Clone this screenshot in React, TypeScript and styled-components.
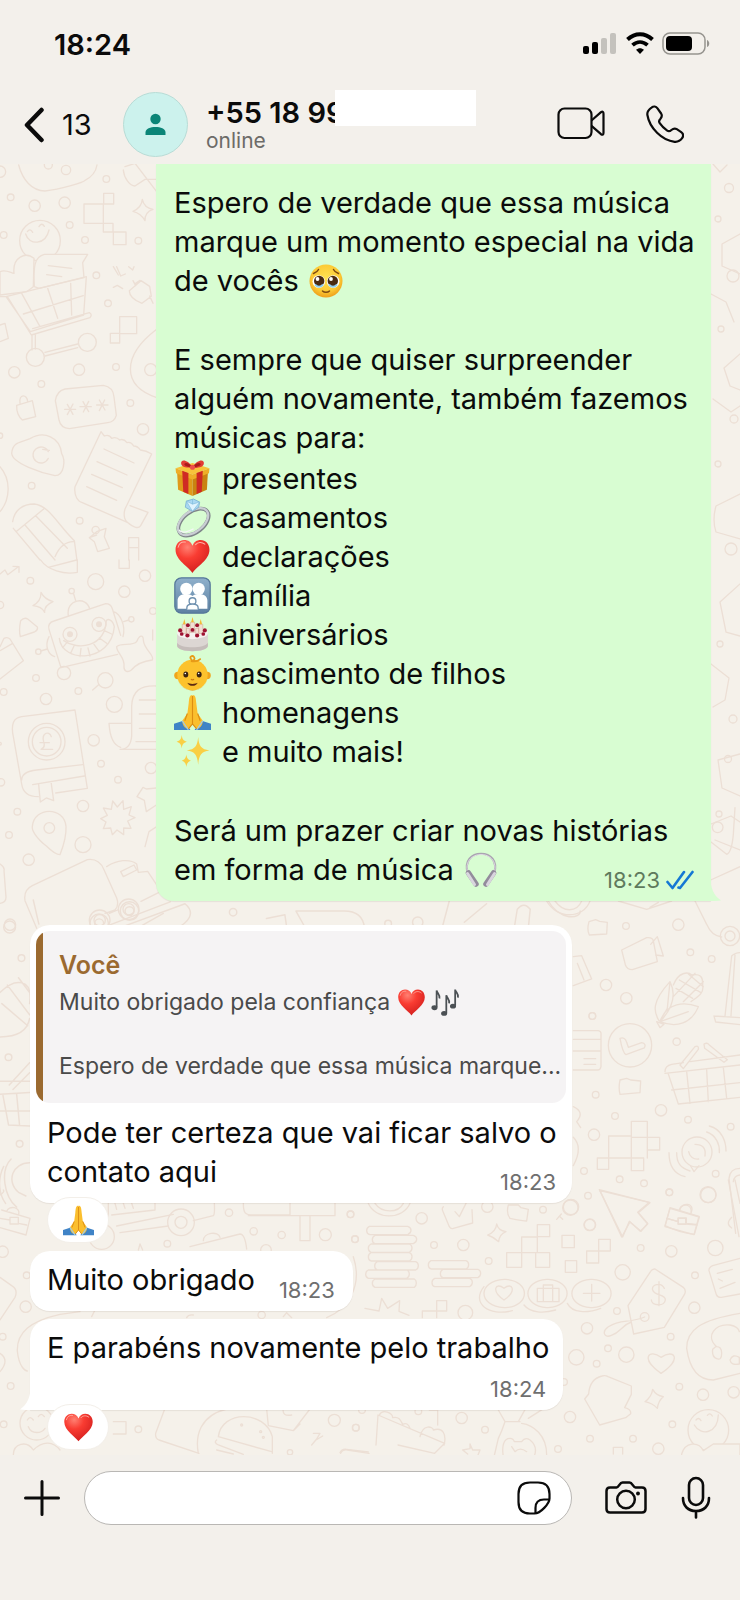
import React from 'react';
import styled, { createGlobalStyle } from 'styled-components';

const GlobalStyle = createGlobalStyle`
  * { box-sizing: border-box; }
  body {
    margin: 0;
    background: #f3f0eb;
    color: #0b0b0b;
    font-family: Inter, "Liberation Sans", sans-serif;
  }
  p, h1, ul { margin: 0; padding: 0; font: inherit; }
  ul { list-style: none; }
`;

const Screen = styled.div`
  display: flex;
  flex-direction: column;
  min-height: 100vh;
  background: #f3f0eb;
`;

const StatusBar = styled.div`
  display: flex;
  align-items: center;
  justify-content: space-between;
  height: 84px;
  padding: 4px 30px 0 54px;
  font-size: 29px;
  font-weight: 600;
`;

const StatusIcons = styled.div`
  display: flex;
  align-items: center;
  gap: 8px;
`;

const Header = styled.header`
  display: flex;
  align-items: center;
  height: 80px;
  padding: 0 56px 0 20px;
`;

const IconButton = styled.button`
  display: flex;
  align-items: center;
  padding: 0;
  border: 0;
  background: none;
  color: #0b0b0b;
  font: inherit;
  flex: none;
`;

const BackButton = styled(IconButton)`
  gap: 14px;
  width: 103px;
  font-size: 29px;
`;

const Contact = styled.div`
  position: relative;
  flex: 1;
  min-width: 0;
  margin-left: 18px;
`;

const ContactName = styled.h1`
  padding-top: 2px;
  font-size: 29px;
  line-height: 32px;
  font-weight: 600;
`;

const Presence = styled.p`
  font-size: 21px;
  line-height: 24px;
  color: #6c6b68;
`;

const Redaction = styled.span`
  position: absolute;
  left: 129px;
  top: -5px;
  width: 141px;
  height: 36px;
  background: #fff;
`;

const CallActions = styled.div`
  display: flex;
  align-items: center;
  gap: 41px;
`;

const Chat = styled.main`
  position: relative;
  display: flex;
  flex-direction: column;
  align-items: flex-start;
  flex: 1;
  padding: 0 29px 0 30px;
  background: #f5f1ea;
  overflow: hidden;
`;

const WallpaperArt = styled.svg`
  position: absolute;
  inset: 0;
  width: 100%;
  height: 100%;
`;

const Bubble = styled.article`
  position: relative;
  background: #fff;
  box-shadow: 0 1px 1px rgba(60, 40, 20, 0.08);
  font-size: 29px;
  line-height: 39px;
`;

const SentBubble = styled(Bubble)`
  display: flex;
  flex-direction: column;
  gap: 40px;
  align-self: flex-end;
  width: 555px;
  max-width: 82%;
  padding: 19px 12px 12px 18px;
  border-radius: 0 0 0 18px;
  background: #d8fdd2;
`;

const QuotedBubble = styled(Bubble)`
  width: 542px;
  max-width: 88%;
  margin-top: 24px;
  padding: 6px;
  border-radius: 20px;
`;

const ShortBubble = styled(Bubble)`
  display: flex;
  align-items: flex-end;
  gap: 24px;
  margin-top: 8px;
  padding: 9px 18px 12px 17px;
  border-radius: 20px;
`;

const TallBubble = styled(Bubble)`
  display: flex;
  flex-direction: column;
  margin-top: 8px;
  padding: 9px 14px 8px 17px;
  border-radius: 20px 20px 20px 0;
`;

const Tail = styled.svg<{ $side: 'left' | 'right' }>`
  position: absolute;
  bottom: 0;
  ${(p) => (p.$side === 'left' ? 'left: -11px;' : 'right: -11px;')}
`;

const Lines = styled.p`
  white-space: pre-line;
`;

const ClosingLine = styled.div`
  display: flex;
  align-items: flex-end;
  justify-content: space-between;
  padding-right: 5px;
`;

const TopicList = styled.ul`
  padding-top: 2px;
`;

const Topic = styled.li`
  display: flex;
  align-items: center;
  gap: 11px;
`;

const Meta = styled.div<{ $sent?: boolean }>`
  display: flex;
  align-items: center;
  gap: 6px;
  margin-bottom: -4px;
  font-size: 22px;
  line-height: 26px;
  color: ${(p) => (p.$sent ? '#5f7a5d' : '#6f6f6f')};
`;

const TallMeta = styled(Meta)`
  align-self: flex-end;
  margin: 9px 3px 0 0;
`;

const Quote = styled.blockquote`
  margin: 0;
  height: 172px;
  padding: 18px 4px 0 23px;
  border-radius: 14px;
  background: linear-gradient(to right, #9b6a30 7px, #f5f3f4 7px);
  color: #4a4a4a;
  font-size: 23px;
  line-height: 32px;
`;

const QuoteAuthor = styled.p`
  margin-bottom: 5px;
  font-size: 25px;
  font-weight: 600;
  color: #9b6a30;
`;

const QuoteLine = styled.p`
  display: flex;
  align-items: center;
  gap: 5px;
  margin-bottom: 32px;
`;

const QuoteCut = styled.p`
  white-space: nowrap;
`;

const QuotedBody = styled.div`
  padding: 10px 5px 6px 11px;
`;

const Reaction = styled.div`
  position: relative;
  display: flex;
  align-items: center;
  justify-content: center;
  width: 62px;
  height: 46px;
  margin: -6px 0 0 17px;
  border: 1px solid #f3efe9;
  border-radius: 23px;
  background: #fff;
`;

const Emoji = styled.svg<{ $size?: number; $gap?: number }>`
  flex: none;
  width: ${(p) => p.$size ?? 37}px;
  height: ${(p) => p.$size ?? 37}px;
  margin-left: ${(p) => p.$gap ?? 0}px;
  vertical-align: -8px;
  overflow: visible;
`;

const Footer = styled.footer`
  display: flex;
  align-items: flex-start;
  height: 145px;
  padding: 16px 29px 0 23px;
`;

const FooterButton = styled(IconButton)<{ $before?: number }>`
  height: 54px;
  margin-left: ${(p) => p.$before ?? 0}px;
`;

const Composer = styled.div`
  display: flex;
  align-items: center;
  flex: 1;
  min-width: 0;
  height: 54px;
  margin-left: 23px;
  padding: 0 20px 0 24px;
  border: 1px solid #b9b7b4;
  border-radius: 27px;
  background: #fff;
`;

const ComposerInput = styled.input`
  flex: 1;
  min-width: 0;
  height: 40px;
  border: 0;
  outline: 0;
  background: transparent;
  font: inherit;
  font-size: 29px;
`;

type EmojiProps = { size?: number; gap?: number };

const emoji = (label: string, art: React.ReactNode) =>
  function EmojiGlyph({ size, gap }: EmojiProps) {
    return (
      <Emoji viewBox="0 0 36 36" role="img" aria-label={label} $size={size} $gap={gap}>
        {art}
      </Emoji>
    );
  };

const Pleading = emoji('rosto suplicante', (
  <>
    <defs>
      <radialGradient id="face" cx=".5" cy=".4" r=".6">
        <stop offset="0" stopColor="#ffe152" />
        <stop offset=".7" stopColor="#fcc934" />
        <stop offset="1" stopColor="#ee9f1c" />
      </radialGradient>
    </defs>
    <circle cx="18" cy="18" r="16.5" fill="url(#face)" />
    <circle cx="10.800" cy="18.5" r="6.300" fill="#fff" />
    <circle cx="25.200" cy="18.5" r="6.300" fill="#fff" />
    <circle cx="11.2" cy="18" r="5.200" fill="#4a2a12" />
    <circle cx="24.8" cy="18" r="5.200" fill="#4a2a12" />
    <circle cx="9.5" cy="16" r="1.9" fill="#fff" />
    <circle cx="23" cy="16" r="1.9" fill="#fff" />
    <path d="M7 21.500c2 3 6 3 8 0M21 21.500c2 3 6 3 8 0" stroke="#8fd0f2" strokeWidth="2" fill="none" />
    <path d="M5.500 10.500c2-.6 4-2 5-4M30.500 10.500c-2-.6-4-2-5-4M14.500 28c1.800 1.800 5.200 1.800 7 0" stroke="#7d4a12" strokeWidth="1.500" fill="none" strokeLinecap="round" />
  </>
));

const Gift = emoji('presente', (
  <>
    <path d="M3 12l15 5v18L4 29z" fill="#e09a1a" />
    <path d="M33 12l-15 5v18l14-6z" fill="#c98310" />
    <path d="M1.500 8L18 3l16.500 5L18 14z" fill="#f7c33b" />
    <path d="M1.500 8L18 14v5L2 13zM34.500 8L18 14v5l16-6z" fill="#eeae27" />
    <path d="M8 10.500l6 2.200V33l-5-2zM28 10.500l-6 2.200V33l5-2z" fill="#cf2a24" />
    <path d="M18 7C13-1 6-1 7 4c.5 3 6 4 11 4 5 0 10.500-1 11-4 1-5-6-5-11 3z" fill="#e23b35" />
    <path d="M18 7c-3-4-7-5-8-3 0 2 4 3 8 3zM18 7c3-4 7-5 8-3 0 2-4 3-8 3z" fill="#a81c1c" />
    <circle cx="18" cy="7" r="2.500" fill="#ee5049" />
  </>
));

const Ring = emoji('aliança', (
  <>
    <ellipse cx="19" cy="22.500" rx="17" ry="10" transform="rotate(-38 19 22.500)" fill="none" stroke="#7e8489" strokeWidth="3.600" />
    <ellipse cx="18.500" cy="22" rx="17" ry="10" transform="rotate(-38 18.500 22)" fill="none" stroke="#c9ced3" strokeWidth="2.200" />
    <path d="M5 30c2 4 9 2 14-1" stroke="#f5f7f8" strokeWidth="1.200" fill="none" />
    <path d="M12 2l7-2 6 3-1 5-6 4-7-4z" fill="#a9d8f2" stroke="#6fa9cd" strokeWidth=".7" />
    <path d="M12 2l6 3 7-2-7 9zM18 5V0" fill="#dff3fd" stroke="#7db8da" strokeWidth=".6" />
  </>
));

const Heart = emoji('coração', (
  <>
    <defs>
      <radialGradient id="heart" cx=".35" cy=".22" r=".85">
        <stop offset="0" stopColor="#ff8072" />
        <stop offset=".4" stopColor="#f93c32" />
        <stop offset="1" stopColor="#cf1c1c" />
      </radialGradient>
    </defs>
    <path d="M18 34C14 28 1.500 21.500 1.500 11.500 1.500 5.500 5.500 2 10 2c3.800 0 6.800 2 8 5.500C19.200 4 22.200 2 26 2c4.500 0 8.500 3.500 8.500 9.500C34.500 21.500 22 28 18 34z" fill="url(#heart)" />
    <path d="M4 9c1-4 4-5.500 7-5M21 6.500c2-2.500 6-3 9-.5" stroke="#ffb3a8" strokeWidth="1" fill="none" strokeLinecap="round" />
  </>
));

const Family = emoji('família', (
  <>
    <defs>
      <linearGradient id="family" x1="0" y1="0" x2="0" y2="1">
        <stop offset="0" stopColor="#8fb0cb" />
        <stop offset="1" stopColor="#5e81a2" />
      </linearGradient>
    </defs>
    <rect x=".8" y=".8" width="34.400" height="34.400" rx="6.500" fill="url(#family)" stroke="#56789a" strokeWidth="1.200" />
    <circle cx="12" cy="11.500" r="6" fill="#fff" />
    <circle cx="24" cy="11.500" r="6" fill="#fff" />
    <path d="M3.500 31V23c0-4 3-6.500 8.500-6.500 2.500 0 5 .7 6 2 1-1.300 3.500-2 6-2 5.500 0 8.500 2.500 8.500 6.500v8z" fill="#fff" />
    <circle cx="18" cy="23.500" r="3.300" fill="#fff" stroke="#6d8fae" strokeWidth="1.300" />
    <path d="M12.500 31.500v-1.500c0-5 11-5 11 0v1.500" fill="#fff" stroke="#6d8fae" strokeWidth="1.300" />
  </>
));

const Cake = emoji('bolo', (
  <>
    <path d="M3 17v12c0 7 30 7 30 0V17z" fill="#dcd6d3" />
    <path d="M3 26c3 6 27 6 30 0v3c0 7-30 7-30 0z" fill="#c5bdba" />
    <ellipse cx="18" cy="16.500" rx="15" ry="6" fill="#f6f2ef" />
    <path d="M8 8h4v9H8zM16 6h4v10h-4zM24 8h4v9h-4zM12 12h3v8h-3zM21 12h3v8h-3z" fill="#f2dfd3" stroke="#cda08f" strokeWidth=".5" />
    <path d="M10 3l1.300 5H8.700zM18 1l1.300 5h-2.600zM26 3l1.300 5h-2.600z" fill="#f5b934" />
    <g fill="#9e1330">
      <circle cx="6" cy="14" r="2" /><circle cx="13.500" cy="9" r="1.900" /><circle cx="22.500" cy="9" r="1.900" /><circle cx="30" cy="14" r="2" />
      <circle cx="13" cy="19" r="2" /><circle cx="18" cy="13.500" r="1.900" /><circle cx="22.500" cy="19" r="2" /><circle cx="7.500" cy="17.500" r="1.800" /><circle cx="28.500" cy="17.500" r="1.800" />
    </g>
  </>
));

const Baby = emoji('bebê', (
  <>
    <circle cx="3.800" cy="20" r="3.600" fill="#f0a51c" />
    <circle cx="32.200" cy="20" r="3.600" fill="#f0a51c" />
    <circle cx="18" cy="19.500" r="14.800" fill="#fcc22d" />
    <path d="M4 24c3 14 25 14 28 0-2 7-7 10-14 10S6 31 4 24z" fill="#ec9a18" />
    <path d="M17 4.500C14 1.500 18 0 19.500 2s-.5 4-3 4c4 .8 7 0 9-2" fill="none" stroke="#e79a17" strokeWidth="1.700" strokeLinecap="round" />
    <ellipse cx="11.500" cy="19" rx="2.400" ry="2.900" fill="#3b2412" />
    <ellipse cx="24.500" cy="19" rx="2.400" ry="2.900" fill="#3b2412" />
    <circle cx="11" cy="18" r=".8" fill="#fff" /><circle cx="24" cy="18" r=".8" fill="#fff" />
    <path d="M16.500 23.500c1 .8 2 .8 3 0" stroke="#c97812" strokeWidth="1.200" fill="none" />
    <path d="M13 27c2 1.500 8 1.500 10 0-1 4-9 4-10 0z" fill="#5c2a12" />
  </>
));

const Pray = emoji('mãos unidas', (
  <>
    <path d="M0 29l9-3 7 9H0zM36 29l-9-3-7 9h16z" fill="#3f83c6" />
    <path d="M17.800 1c-2.800 0-3 3-3.500 8L13 19l-5 7c0 4 2.500 7.500 6 8l4-5zM18.200 1c2.800 0 3 3 3.500 8L23 19l5 7c0 4-2.500 7.500-6 8l-4-5z" fill="#fbbf2e" />
    <path d="M18 2v27M13 19l-2.500 7M23 19l2.500 7M14 34l4-5 4 5" stroke="#dc8e13" strokeWidth="1.100" fill="none" />
    <path d="M8 26l6 9M28 26l-6 9" stroke="#9acbf0" strokeWidth="1.200" />
  </>
));

const Sparkles = emoji('brilhos', (
  <g fill="#f9cf45">
    <path d="M23.500 4c.8 9 3 12 11 13-8 1-10.200 4.500-11 14-.8-9.500-3-13-11-14 8-1 10.200-4 11-13z" />
    <path d="M7.500 2c.6 4 1.500 5.500 5 6.500-3.500 1-4.400 2.500-5 6.500-.6-4-1.500-5.500-5-6.500 3.500-1 4.400-2.500 5-6.500z" />
    <path d="M12 21c.5 3.500 1.500 5 4.500 6-3 1-4 2.500-4.500 6-.5-3.500-1.500-5-4.500-6 3-1 4-2.500 4.500-6z" />
  </g>
));

const Headphones = emoji('fones de ouvido', (
  <>
    <path d="M5 22C-4-5 40-5 31 22" fill="none" stroke="#aaa5b1" strokeWidth="2.200" />
    <path d="M5 22C-3-4 39-4 31 22" fill="none" stroke="#e3e0e7" strokeWidth=".9" />
    <path d="M5.500 21l7.500 11M30.500 21L23 32" stroke="#938c9c" strokeWidth="5.500" strokeLinecap="round" />
    <path d="M4.500 21.500l7 11M31.500 21.500l-7 11" stroke="#d9d5de" strokeWidth="3" strokeLinecap="round" />
  </>
));

const Notes = emoji('notas musicais', (
  <g fill="#4b5054" stroke="#4b5054" strokeWidth="2.200">
    <path d="M7 24V3c1 4 4.500 5 3.500 10M19 31V9c1 4 4.500 5 3.500 10M30 22V2c1 4 4.500 5 3.500 10" fill="none" />
    <ellipse cx="4.300" cy="24.500" rx="2.700" ry="2" /><ellipse cx="16.300" cy="31.500" rx="2.700" ry="2" /><ellipse cx="27.300" cy="22.500" rx="2.700" ry="2" />
  </g>
));

const TOPICS: [React.FC<EmojiProps>, string][] = [
  [Gift, 'presentes'],
  [Ring, 'casamentos'],
  [Heart, 'declarações'],
  [Family, 'família'],
  [Cake, 'aniversários'],
  [Baby, 'nascimento de filhos'],
  [Pray, 'homenagens'],
  [Sparkles, 'e muito mais!'],
];

type Dot = [number, number, number];

function Dots({ at }: { at: Dot[] }) {
  return (
    <>
      {at.map(([x, y, r]) => (
        <circle key={`${x}-${y}`} cx={x} cy={y} r={r} />
      ))}
    </>
  );
}

function Wallpaper() {
  return (
    <WallpaperArt viewBox="0 164 740 1291" preserveAspectRatio="xMidYMin slice" aria-hidden="true">
      <g fill="none" stroke="#ecdfd5" strokeWidth="4" strokeLinejoin="round" strokeLinecap="round">
        <g transform="translate(0 160) scale(.33333)">
          <Dots at={[[0, 35, 17], [319, 57, 10], [32, 112, 10], [104, 137, 17], [194, 128, 17], [209, 195, 10], [11, 225, 10], [255, 240, 10], [415, 242, 10], [289, 346, 10], [324, 430, 10], [43, 637, 17], [237, 629, 17], [348, 621, 10], [124, 672, 10], [391, 729, 10], [429, 808, 17], [0, 827, 8], [95, 977, 10], [239, 1082, 10], [198, 30, 14], [145, 15, 12], [452, 629, 18], [262, 547, 27], [106, 592, 27]]} />
          <path d="M56 15C68 60 95 92 135 93c45-6 115-25 120-32 20-10 33-28 36-46M370 30c2 25 20 48 35 48l30-20h35M375 20l30-10 65 85" />
          <path d="M311 100h30v32h-30zM252 132h58v58h-58zM310 190h29v26h-29zM340 216h38v38h-38zM427 118q5 25 32 30-25 8-24 34-12-22-36-28 26-12 28-36z" />
          <circle cx="120" cy="242" r="61" />
          <path d="M77 222c10 35 60 34 70-12M82 215q8-12 16 2M117 200q8-14 16-1" />
          <path fill="#f5f1ea" d="M0 335c15-8 30 2 42 5-5-50 35-65 60-45l-2 85-20 15-80 10z" />
          <path fill="#f5f1ea" d="M103 380c-3-60 0-90 30-97h130l-15 25 4 45-135 32zM145 317l70 8M140 344l45 6" />
          <path d="M18 410l241-60-8 115-160 50zM65 400l55 100M143 385l30 90M212 370l3 95M70 462l180-55M0 410h22l72 115 176-52q8-10-2-15l-170 48M96 525v45M106 525v42M135 577l98-25M135 588l98-25M0 495l15-5 10 45-25 10" />
          <path d="M340 320l15 25M350 320l12 28 14-6M386 320l12 10 4-10M340 382l12-6 16 10M388 392l35-30 26 17 5 30-28 21q-38-15-38-38zM399 362l8 15M420 361l-14 10M449 408l10 22" />
          <path d="M359 470h51v51h-51zM331 520h28v29h-28zM470 508c-105 80-105 170 0 205M50 736l47-14 10 48-40 10q-18-15-17-44zM60 730c-5-30 22-28 23-5" />
          <path d="M195 687l115-11q30 5 32 35l7 55q-6 20-26 22l-115 18q-26-2-31-26l-11-58q5-30 29-35zM194 748h33M202 733l17 30M219 732l-17 32M240 740h34M249 725l17 30M266 724l-16 32M290 735h34M298 720l17 30M314 720l-16 32" />
          <path d="M35 880c3-35 25-32 55-44 42-25 90-5 95 45 12 20 8 66-20 66-40-8-128-36-130-67zM145 875a24 24 0 1 0 0 20M128 868l20 3" />
          <path d="M303 815l10 13q14-6 22 7 14-6 24 5 12-5 22 8 12-4 20 10 12 0 20 12 18 2 34 12l-80 165c-6 20 0 35 7 40q30 25 40 10l22-40-54-20M225 980l78-165M225 980c-4 30 10 45 22 48l135 59M312 867l90 42M291 905l90 40M275 943l92 40M260 980l90 41" />
          <path d="M0 920c35 40 30 100 0 135M38 1085c5-35 30-53 65-53 45 5 70 62 120 110l8 60M40 1105l80 95M48 1115l83-68M75 1095l90 105M107 1067l95 98M165 1190q20-45 55-45" />
          <path d="M270 1132l20-7M290 1115l28-10-5 25 15 35-35 10-10-30-15-12z" /><circle cx="287" cy="1110" r="11" /><path d="M386 1133h30v67M386 1133v67M386 1163h30" />
        </g>

        <g transform="translate(0 560) scale(.33333)">
          <Dots at={[[287, 65, 24], [91, 62, 10], [435, 47, 17], [373, 95, 17], [0, 135, 11], [394, 178, 8], [459, 153, 10], [115, 275, 8], [192, 339, 20], [108, 354, 10], [316, 361, 23], [11, 396, 10], [235, 393, 10], [138, 417, 17], [343, 433, 24], [0, 551, 4], [281, 541, 17], [303, 611, 10], [354, 659, 10], [453, 624, 17], [3, 667, 11], [249, 738, 17], [52, 755, 10], [27, 825, 10], [249, 854, 24], [148, 804, 16], [86, 899, 17], [30, 1094, 17], [299, 1081, 31], [299, 1081, 17], [386, 1048, 31], [386, 1048, 17], [140, 545, 55], [140, 545, 43], [210, 223, 21], [297, 193, 21], [215, 93, 8]]} />
          <g fill="#ecdfd5"><circle cx="210" cy="223" r="7" /><circle cx="297" cy="193" r="7" /></g>
          <path d="M0 42q12-10 15-12l8 14 30-22M39 19l18 1v17M122 0c20 30 70 45 110 37V0M145 22l85-22M357 0v25h31V0M123 97q10 20 36 28-27 12-25 32-9-18-35-20 25-14 24-40zM62 182q12-12 22-4l28 23q3 9-9 15l-42 14q-5-20 1-48zM0 260l12-25q10-5 18 2l40 65-70 55M0 272l38-22" />
          <path d="M183 323l-36-115q-5-20 15-25l155-52q15 0 20 15l25 80M183 323l170-40M205 167c-8-50 55-60 64-20M221 102l6 20M340 155c20 5 38 40 29 75M371 185l15-5M122 273l20-6M147 230c-15 30 0 55 17 60M178 235c8 75 155 75 165-35-5-22-20-25-24-18-5 80-85 90-128 60M188 263l15-18M212 280l10-22M240 290l3-25M270 288l-6-24M298 275l-16-22M320 250l-22-16M335 222l-22-10" />
          <path fill="#f5f1ea" d="M350 260c12-14 48 0 60-15 8-20 20-22 20-5 2 30 35 45 27 60-28 3-50 15-63 30-10 8-22 5-22-8 5-30-22-42-22-62z" />
          <path d="M278 390l18-16M470 378c-50-2-73 15-75 60v90c-3 40-30 40-35 40h110M395 490h-68c3 50 20 68 35 72M418 420h52M418 462h52M418 505h52M408 545h62M458 210v30" />
          <path d="M40 530q-12-55 25-60l160-20 37 235-95 14M40 530l25 142q5 38 50 38M65 660q0-25 45-30l138-16M98 674l155-26M116 674l5 52 18-12 22 8-8-57M154 530c-8-20-30-10-23 15 5 15 0 20-8 23h35M120 548h28" />
          <path d="M180 884q-15 0-40-25c-35-28-45-50-43-60 6-60 95-60 101 0q2 35-18 85zM302 776l20-10-12-22 24 4 4-25 14 18 17-19 2 26 23-8-7 25 18 8-22 10 10 22-22-1 0 20-20-14-14 14-5-20-22 2 8-20zM411 710l18-28 10 5 30-3M469 735l-30 20-6-34-22-11M435 860l12-45 23-15" />
          <path d="M110 1105L75 1022q-5-32 22-45l165-78q35-5 50 30l38 85q8 22-5 36l-30 10M320 920c30-20 70-25 90-8l5 25 28-3 40 60-60 30M362 935l40-20 8 15-40 20zM420 1100l70-40M328 1060l25-10M0 912q15 10 12 20l6 80q0 16-18 18" />
        </g>

        <g transform="translate(0 900) scale(.37)">
          <Dots at={[[268, 63, 25], [268, 63, 12], [350, 30, 25], [350, 30, 12], [26, 73, 16], [630, 33, 10], [1049, 64, 9], [1129, 60, 14], [58, 157, 9], [23, 425, 9], [53, 659, 9]]} />
          <path d="M290 70L460 5M310 80l190-70c30 25 10 50-25 68M90 0l15 65M720 50l50-10 5 35M745 75l-25-5M800 30l130 0q50 0 55 45M800 30l25 45M1195 75l20-75M1255 60l60-50M1390 75l8-50q18-22 35 0l-5 50M1480 0c35 60 90 50 88 30" />
          <path d="M0 250c40-40 90-40 80 30M0 370c50 0 75-20 80-50M20 230l60 80M50 210l30 40M5 280l70 60M25 500l55-60M35 512l45-45M0 490h80M0 525l80-5M8 528l15 80 57 3M45 525l8 85M0 570h80M80 710c-45 0-65 50-30 80l20 10M30 700c-30 30-20 100 15 130M10 720c-20 40-10 80 5 100" />
        </g>

        <g transform="translate(440 820) scale(.33333)">
          <Dots at={[[833, 22, 16], [558, 318, 10], [715, 314, 17], [751, 397, 10], [815, 417, 10], [498, 495, 17], [559, 535, 17], [457, 588, 10], [570, 676, 65], [710, 665, 11], [870, 348, 29], [870, 348, 15]]} />
          <path d="M812 65l48 38q15-5 20-60l5-80M812 180l88-40M765 243l35 70q15 35 45 38M320 243c30 55 110 55 130 0M345 243c25 35 65 35 80 0M535 243l85 25 75-25M630 262l25-15" />
          <path d="M447 305l20-6 12 5 23 3-2 35-52 3q-8-15-1-40zM545 390l75-37q18-2 20 10l12 62-75 24q-16 0-21-15zM632 373l20-23 18 58-23-3M400 410l25-3 30 70-55 20M412 430l20 50" />
          <path d="M690 485c-55 60-50 90-33 117M690 485c20 40 8 80-30 120M690 485l-8 80-22 38M660 605c20-60 75-60 115-45-20 50-65 65-115 45zM660 605l85-30M650 605l10 18 12-10zM700 495c15-40 45-40 55-30 25-5 35 5 33 30 5 25-15 35-35 50M708 505l50 30M718 480l65 38M745 462l45 38M700 530l65-70M730 545l60-60" />
          <path d="M855 588l20-180q10-10 25-10M885 405l-12 182M822 588l78 5M822 588l5 18 73 8M540 655q15-5 20 12l5 15 40-14q15 3 8 16l-55 20q-10-5-18-49zM400 632h75q8 2 8 8v100q-2 10-10 10h-73M400 658h83M400 693h83M432 716h35M432 733h35" />
        </g>

        <g transform="translate(560 1000) scale(.33333)">
          <Dots at={[[97, 48, 10], [107, 284, 10], [303, 331, 17], [165, 348, 10], [384, 359, 10], [512, 380, 10], [102, 404, 17], [72, 513, 10], [179, 538, 10], [252, 550, 10], [467, 521, 10], [84, 587, 10], [328, 577, 10], [444, 584, 24], [33, 621, 23], [90, 674, 17], [411, 456, 45]]} />
          <path d="M315 215q0-18 20-22l35-5M390 185l150-20M315 220l225-25M325 222l30 90 185-20M380 215l10 95M440 210l5 95M490 203l10 92M335 270l205-22M360 195l45-55q12-5 10 8l-45 58zM432 132q10-5 15 2l55 45-10 8-58-42zM180 240l20-5 12 5 30 3-2 35-60 5q-5-20 0-43z" />
          <path d="M146 408h68v66h-68zM214 364h48v48h-48zM262 412h37v38h-37zM214 412h48v62M112 474h34v34h-34zM214 474h37v38h-37zM392 498l10 17 15-18M386 455a26 26 0 0 0 30 22M405 433q35 0 30 35M448 378c40 10 50 50 50 75M440 396c30 10 40 40 38 62M350 458c0 30 10 45 40 55M327 458c0 45 20 65 48 72M40 320c22 10 28 25 10 45l12 18M40 412q30 30 0 85" />
          <path d="M118 569l150 38-35 30 30 35-22 22-33-30-20 47zM330 623l87 26-15 55-87-24zM320 655l35 10M378 670l30 3M355 655h22v18h-22zM358 630c5-22 40-20 35 10M540 505q-30 0-33 30l20 165M520 545q2-18 20-20M8 658L0 650" />
        </g>

        <g transform="translate(340 1180) scale(.33333)">
          <Dots at={[[32, 103, 10], [245, 115, 17], [45, 177, 10], [282, 195, 10], [370, 195, 17], [446, 243, 10], [442, 80, 17], [609, 89, 10], [1105, 45, 23], [749, 135, 17], [988, 37, 10], [902, 204, 10], [994, 214, 17], [1126, 204, 23], [848, 277, 23], [1065, 286, 10], [1063, 383, 17], [831, 393, 10], [376, 398, 22], [741, 445, 17], [992, 470, 10], [709, 532, 23], [804, 505, 10], [770, 551, 10], [859, 524, 23], [672, 606, 10], [1018, 620, 10], [1089, 644, 17], [1181, 637, 17], [690, 711, 17], [365, 714, 17], [48, 743, 10], [435, 749, 10], [235, 694, 10], [66, 690, 10], [997, 733, 10], [750, 776, 10], [879, 776, 10], [955, 806, 17], [654, 807, 10], [914, 411, 13], [1105, 750, 61]]} />
          <path d="M85 70c20 50 105 50 125 0M105 70c20 30 70 30 85 0M310 80q-5 5-2 12l20 48q5 8 12 5l58-16-2-40M345 95l13 15 20-40M505 75h30l8 8 22 5-5 35q-10 0-50-8-12-15-5-40zM470 132q5 20 28 23-20 8-22 30-15-14-33-20 25-10 27-33z" />
          <path d="M88 139h115q10 3 10 12t-10 13H90q-10-3-10-12t8-13zM105 166h115q10 3 10 12t-10 13H105q-8-3-8-12t8-13zM93 192h115q8 3 8 12t-8 13H93q-8-3-8-12t8-13zM93 218h115q8 3 8 12t-8 13H93q-8-3-8-12t8-13zM112 245h115q8 3 8 12t-8 13H112q-8-3-8-12t8-13zM85 270h115q8 3 8 12t-8 13H85q-8-3-8-12t8-13zM105 297h118q6 3 6 12t-6 13H105q-8-3-8-12t8-13zM273 242h105q8 3 8 12t-8 13H273q-8-3-8-12t8-13zM309 268h105q8 3 8 12t-8 13H309q-8-3-8-12t8-13zM284 295h105q8 3 8 12t-8 13H284q-8-3-8-12t8-13z" />
          <path d="M592 134h37v36h-37zM545 171h47v47h-47zM500 218h45v44h-45zM587 218h42v44h-42zM592 171v47M666 166h37v37h-37zM676 242h34v35h-34zM776 178h35v35h-35zM740 213h36v36h-36zM290 362h30v31h-30zM247 413v-20h43v20M75 385l42 8 8-38 18 30 36-23-2 32 30 12M650 118l14-16" />
          <circle cx="691" cy="83" r="23" />
          <path d="M492 298h5c75 5 75 80 0 85h-5c-80-5-80-80 0-85zM620 298h5c75 5 75 80 0 85h-5c-75-5-75-80 0-85zM752 298h5c75 5 75 80 0 85h-5c-75-5-75-80 0-85zM432 320c-40 50 15 90 85 72M552 375c20 25 60 25 95 15M682 370c15 30 60 30 100 15M492 360c-40-28-25-55 0-35 25-20 40 7 0 35zM592 325h65v40h-65zM610 325v-10h28v50M610 325v40M755 313v50M730 340h50" />
          <path d="M780 32l150 36-35 30 28 32-20 24-33-28-25 45zM990 85l88 26-15 52q-45-5-88-26zM980 115l35 10M1038 132l34 3M1014 114h25v18h-25zM1020 88c5-22 45-20 34 8M945 267l85 55q10 10 3 22l-60 98-92 20-17-85 68-103q5-8 13-7zM973 325c-10-20-40-12-35 5 5 18 40 12 38 30-3 20-40 18-42 0M957 305v72M914 411c-50 20-70 5-110 30-20 15-10 35 10 25 30-10 30-30 60-40" />
          <path d="M963 580c-65-45-35-75 0-48 40-27 65 5 0 48zM786 588q10-3 18 2l70 28v25l-20 40q20 5 18 18l-15 12-78 22-45-78 12-15q3-45 40-54zM938 628q10 18 32 22-15 12-18 35-15-16-37-20 20-15 23-37zM1200 400c-120 20-160 50-160 105 10 70 40 95 80 95l80-20M1130 500c-35-30-5-70 40-65q25 5 28 20M1127 500q18-2 18 20t-15 16-12-28zM1170 540q8-20 28-8v20q-25 5-28-12M1165 0l32 170M1185 0l15 70M1175 112q-20 20 0 32M1200 235l-82 22q-12 5-11 15l22 72q5 10 15 8l56-10M1132 280l45-12M1135 297l12 6M1140 325l45-18" />
          <path d="M1063 735c20 35 70 25 72-30M1068 720q8-10 15 2M1102 706q8-10 15 2" />
          <path fill="#f5f1ea" d="M1025 822c10-35 50-40 65-10l30-20h80v50h-175z" />
          <path d="M108 795l6-90 200 85-30 30-110-25M118 705c10-20 40-5 40 8 20-5 25 10 30 20q15-8 22 12M240 770c8-40 40-30 40-20 30-10 40 15 32 45M268 690h25v45M0 818q5-12 20-10l65 8M390 792l8 18 22 0-10 25M390 792v14l-22 4 15 12M475 690l20 35q-10 30-20 50l-14 60M620 825c0-60-40-90-75-95M535 725l25-45M495 725h45M565 715l55-35M490 830c-5-30 0-55 20-55q10 0 13 10h22q10-15 25-5 25 20 12 50M515 800l10 15q15-15 35 0" />
          <path d="M820 822v-20h28v20" />
        </g>

        <g transform="translate(0 1190) scale(.33333)">
          <Dots at={[[687, 68, 11], [761, 124, 11], [845, 135, 11], [1051, 73, 10], [976, 134, 18], [1065, 148, 10], [502, 161, 10], [8, 185, 17], [80, 256, 10], [77, 350, 17], [8, 440, 10], [32, 588, 10], [11, 703, 10], [415, 718, 10], [1003, 691, 18], [1067, 713, 10], [543, 97, 40], [543, 97, 18], [305, 140, 38], [785, 375, 11], [798, 180, 16], [870, 787, 8], [110, 700, 50]]} />
          <path d="M5 60l85 25-12 50-78-22M0 85l30 5M55 100l25 5M30 82h25v20H30zM20 65c5-20 45-15 35 10M0 15q15-10 10-15M325 40v40M335 75l130-15V40M345 40l5 18M370 40l5 15M395 40l5 15M350 108l170-35M360 128l145-20M580 92l60-15q5-5 3-37M730 40c0 30 5 35 30 35h110V40M745 77h260V40M900 77v75h30V77M570 170l150-38q15 0 20 45M610 152c0-25 45-30 50-10M415 180l5-18 8 18" />
          <path d="M0 262l35 25q20 12 10 35L0 390M275 380l10-20M240 365l-60 8c-90 20-130 55-128 110 5 50 25 60 30 60M0 490q30 20 0 55M1060 200c30 90-20 160-80 183M850 380l10-12 15 15M560 383q5-10 20-8" />
          <path d="M82 690q8-14 18 0M115 680q8-14 18 0M85 710c10 25 40 20 50 5M40 795c0-35 40-45 60-15 30-30 60-25 80 0M340 695h38v37h-38M320 690v30M495 655l-28 75q-2 15 10 20l120 40M680 657c-80 20-95 80-85 133M655 740c10-80 140-80 162 0v50M655 740l160 45M650 750q-10 8 5 15l75 28M650 780l50 12M800 657l5 50 75 15 20-20M930 657l-50 65M850 655q-5 25 25 20M940 730l20 0-12 20 20-12M935 765l15-18M1022 790q5-12 20-10l65 10" />
          <circle cx="725" cy="705" r="3" /><circle cx="782" cy="725" r="3" /><circle cx="790" cy="742" r="3" />
        </g>

        <g transform="translate(711 164) scale(.5)" strokeWidth="2.600">
          <Dots at={[[36, 48, 9], [14, 110, 6], [44, 224, 12], [20, 330, 6], [46, 510, 8], [14, 600, 6], [40, 770, 12], [18, 960, 6], [44, 1110, 8], [16, 1300, 6], [34, 1190, 7]]} />
          <path d="M4 0l14 16L32 2M58 140l-36 20v44l36 16M0 260l30 16 16 40M58 380l-32 28 12 36 20 8M4 470l36 26 18-12M58 660l-48 24q-8 28 0 52l48 14M58 840l-40 36 12 60 28 8M0 1000l36 28-8 44L4 1086M58 1180l-44 12 8 56 36 16M0 1320l40-16 18 12M8 1352l50 20" />
        </g>
      </g>
    </WallpaperArt>
  );
}

export default function App() {
  return (
    <>
      <GlobalStyle />
      <Screen>
        <StatusBar>
          <time>18:24</time>
          <StatusIcons>
            <svg width="35" height="24" viewBox="0 0 35 24" aria-label="Sinal">
              <rect x="0" y="14" width="6" height="8" rx="2" />
              <rect x="9" y="10" width="6" height="12" rx="2" />
              <rect x="18" y="6" width="6" height="16" rx="2" fill="#c4c2bd" />
              <rect x="27" y="1" width="6" height="21" rx="2" fill="#c4c2bd" />
            </svg>
            <svg width="28" height="24" viewBox="0 0 28 24" aria-label="Wi-Fi">
              <path d="M1.500 7.500C9 .5 19 .5 26.500 7.500" fill="none" stroke="#000" strokeWidth="4" />
              <path d="M6.500 13.200c4.600-4.200 10.400-4.200 15 0" fill="none" stroke="#000" strokeWidth="3.800" />
              <path d="M10 17.800c2.500-2.200 5.500-2.200 8 0L14 22z" />
            </svg>
            <svg width="48" height="24" viewBox="0 0 48 24" aria-label="Bateria">
              <rect x="1" y="1" width="42" height="21" rx="7" fill="none" stroke="#96948f" strokeWidth="1.500" />
              <rect x="4" y="4" width="26" height="15" rx="4" />
              <path d="M45 8c3 1 3 6 0 7z" fill="#96948f" />
            </svg>
          </StatusIcons>
        </StatusBar>

        <Header>
          <BackButton aria-label="Voltar, 13 conversas">
            <svg width="28" height="38" viewBox="0 0 28 38" fill="none" stroke="#0b0b0b" strokeWidth="4.500" strokeLinecap="round" strokeLinejoin="round">
              <path d="M21.500 5L7 20l14.500 15" />
            </svg>
            13
          </BackButton>
          <svg width="65" height="65" viewBox="0 0 65 65" aria-label="Foto do contato">
            <circle cx="32.500" cy="32.500" r="32" fill="#ccf2ed" stroke="#b8dcd6" />
            <circle cx="32.500" cy="27" r="5.200" fill="#0b8577" />
            <path d="M22.500 43v-2.500c0-4 5-5.500 10-5.500s10 1.500 10 5.500V43z" fill="#0b8577" />
          </svg>
          <Contact>
            <ContactName>+55 18 99</ContactName>
            <Presence>online</Presence>
            <Redaction />
          </Contact>
          <CallActions>
            <IconButton aria-label="Chamada de vídeo">
              <svg width="48" height="34" viewBox="0 0 48 34" fill="none" stroke="#0b0b0b" strokeWidth="2.200" strokeLinejoin="round">
                <rect x="1.500" y="1.500" width="33" height="29.500" rx="6" />
                <path d="M34.500 13.500l9.500-8.300q2.500-1.500 2.500 1.500v19q0 3-2.500 1.500l-9.500-8.300" />
              </svg>
            </IconButton>
            <IconButton aria-label="Chamada de voz">
              <svg width="38" height="38" viewBox="0 0 38 38" fill="none" stroke="#0b0b0b" strokeWidth="2.200" strokeLinejoin="round">
                <path d="M5.500 2.600c2.200-1.700 4.500-1.400 6 .7l3.600 5.200c1.300 2 .8 3.600-.8 5.400-1.500 1.600-1.700 2.600-.6 4.200 2 2.900 4.600 5.500 7.500 7.500 1.600 1.100 2.600.9 4.200-.6 1.800-1.600 3.400-2.100 5.400-.8l4.400 3c2.100 1.500 2.400 3.800.9 6-1.800 2.600-4.300 3.900-7.500 3.600C16 35.400 3.500 23 1.400 10 .9 6.900 2.500 4.700 5.500 2.600z" />
              </svg>
            </IconButton>
          </CallActions>
        </Header>

        <Chat>
          <Wallpaper />
          <SentBubble>
            <Lines>
              {'Espero de verdade que essa música\nmarque um momento especial na vida\nde vocês'}
              <Pleading gap={9} size={36} />
            </Lines>
            <div>
              <Lines>{'E sempre que quiser surpreender\nalguém novamente, também fazemos\nmúsicas para:'}</Lines>
              <TopicList>
                {TOPICS.map(([Icon, label]) => (
                  <Topic key={label}>
                    <Icon />
                    {label}
                  </Topic>
                ))}
              </TopicList>
            </div>
            <div>
              <Lines>Será um prazer criar novas histórias</Lines>
              <ClosingLine>
                <Lines>
                  em forma de música
                  <Headphones gap={9} size={36} />
                </Lines>
                <Meta $sent>
                  <time>18:23</time>
                  <svg width="28" height="20" viewBox="0 0 28 20" fill="none" stroke="#1578d4" strokeWidth="2.600" strokeLinecap="round" strokeLinejoin="round" aria-label="Lida">
                    <path d="M1.500 12l5 6L18 2M12.500 17.500l1.500.5L26.500 2" />
                  </svg>
                </Meta>
              </ClosingLine>
            </div>
            <Tail $side="right" width="12" height="24" viewBox="0 0 12 24">
              <path d="M0 0c1 11 3 18 11 23.500-4 .5-8 .5-11 .5z" fill="#d8fdd2" />
            </Tail>
          </SentBubble>

          <QuotedBubble>
            <Quote>
              <QuoteAuthor>Você</QuoteAuthor>
              <QuoteLine>
                Muito obrigado pela confiança
                <Heart size={29} gap={2} />
                <Notes size={29} />
              </QuoteLine>
              <QuoteCut>Espero de verdade que essa música marque...</QuoteCut>
            </Quote>
            <QuotedBody>
              <Lines>Pode ter certeza que vai ficar salvo o</Lines>
              <ClosingLine>
                <Lines>contato aqui</Lines>
                <Meta>
                  <time>18:23</time>
                </Meta>
              </ClosingLine>
            </QuotedBody>
          </QuotedBubble>
          <Reaction>
            <Pray size={31} />
          </Reaction>

          <ShortBubble>
            <p>Muito obrigado</p>
            <Meta>
              <time>18:23</time>
            </Meta>
          </ShortBubble>

          <TallBubble>
            <p>E parabéns novamente pelo trabalho</p>
            <TallMeta>
              <time>18:24</time>
            </TallMeta>
            <Tail $side="left" width="12" height="24" viewBox="0 0 12 24">
              <path d="M12 0C11 11 9 18 1 23.500c4 .5 8 .5 11 .5z" fill="#fff" />
            </Tail>
          </TallBubble>
          <Reaction>
            <Heart size={31} />
          </Reaction>
        </Chat>

        <Footer>
          <FooterButton aria-label="Anexar">
            <svg width="38" height="38" viewBox="0 0 38 38" stroke="#0b0b0b" strokeWidth="3" strokeLinecap="round">
              <path d="M19 2.500v33M2.500 19h33" />
            </svg>
          </FooterButton>
          <Composer>
            <ComposerInput type="text" aria-label="Mensagem" />
            <IconButton aria-label="Figurinhas">
              <svg width="34" height="34" viewBox="0 0 34 34" fill="none" stroke="#0b0b0b" strokeWidth="2.200" strokeLinejoin="round">
                <path d="M17.500 32.500H13C5 32.500 1.500 29 1.500 21v-8C1.500 5 5 1.500 13 1.500h8c8 0 11.500 3.500 11.500 11.500v4.500c0 5-9 15-15 15z" />
                <path d="M18.500 32.300V27c0-6 2.500-8.500 8.500-8.500h5.300" />
              </svg>
            </IconButton>
          </Composer>
          <FooterButton aria-label="Câmera" $before={33}>
            <svg width="42" height="34" viewBox="0 0 42 34" fill="none" stroke="#0b0b0b" strokeWidth="2.500" strokeLinejoin="round">
              <path d="M5 6.500h6.500c2.500 0 3-5 6-5h7c3 0 3.500 5 6 5H37q3.500 0 3.500 3.500v18q0 3.500-3.500 3.500H5q-3.500 0-3.500-3.500V10q0-3.500 3.500-3.500z" />
              <circle cx="21" cy="18.500" r="8.800" />
              <circle cx="33" cy="12.500" r="1.200" fill="#0b0b0b" strokeWidth="1.500" />
            </svg>
          </FooterButton>
          <FooterButton aria-label="Gravar áudio" $before={34}>
            <svg width="30" height="44" viewBox="0 0 30 44" fill="none" stroke="#0b0b0b" strokeWidth="2.600" strokeLinecap="round">
              <rect x="8" y="2" width="14" height="27" rx="7" />
              <path d="M2 22c0 8 5 13 13 13s13-5 13-13M15 35v6.500" />
            </svg>
          </FooterButton>
        </Footer>
      </Screen>
    </>
  );
}
